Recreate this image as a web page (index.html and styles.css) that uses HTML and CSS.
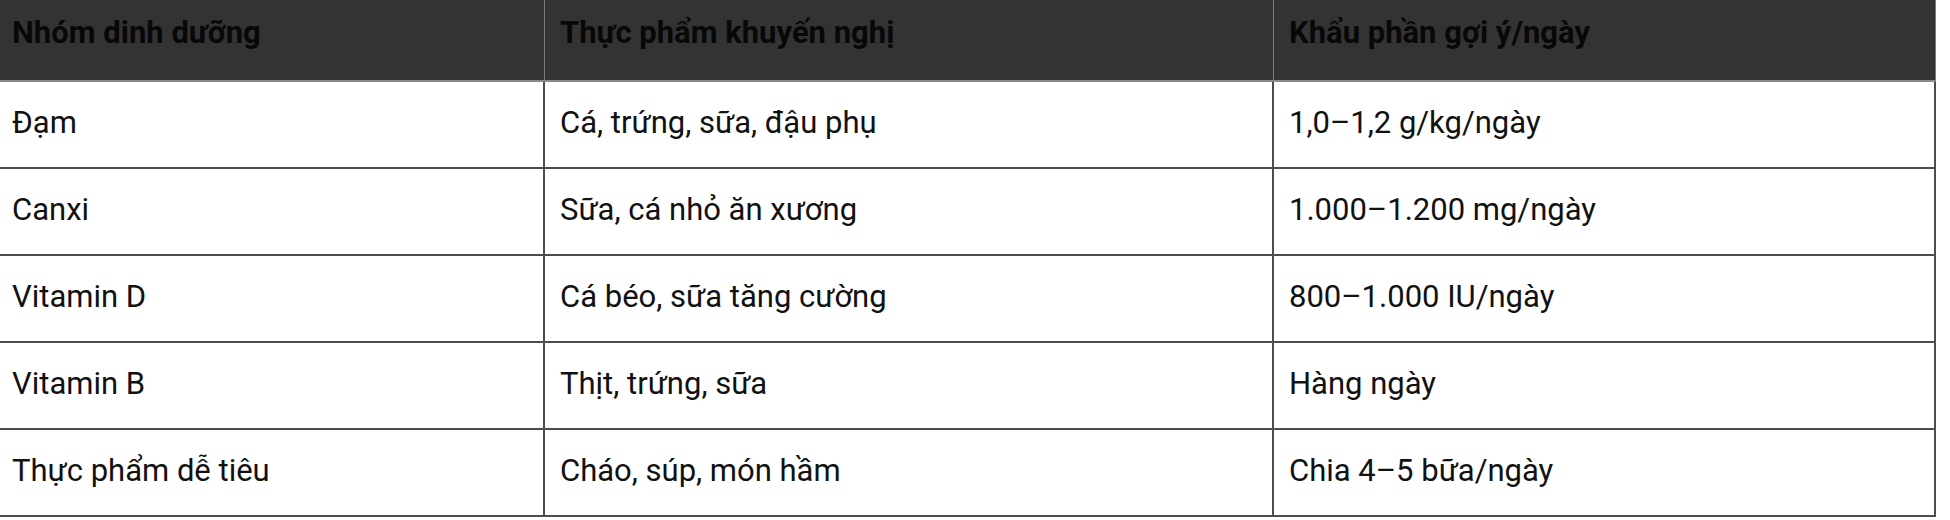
FILE: index.html
```html
<!DOCTYPE html>
<html lang="vi">
<head>
<meta charset="utf-8">
<title>Dinh dưỡng</title>
<link rel="stylesheet" href="styles.css">
</head>
<body>
<table class="nutri">
  <colgroup>
    <col class="c1"><col class="c2"><col class="c3">
  </colgroup>
  <thead>
    <tr>
      <th>Nhóm dinh dưỡng</th>
      <th>Thực phẩm khuyến nghị</th>
      <th>Khẩu phần gợi ý/ngày</th>
    </tr>
  </thead>
  <tbody>
    <tr><td>Đạm</td><td>Cá, trứng, sữa, đậu phụ</td><td>1,0–1,2 g/kg/ngày</td></tr>
    <tr><td>Canxi</td><td>Sữa, cá nhỏ ăn xương</td><td>1.000–1.200 mg/ngày</td></tr>
    <tr><td>Vitamin D</td><td>Cá béo, sữa tăng cường</td><td>800–1.000 IU/ngày</td></tr>
    <tr><td>Vitamin B</td><td>Thịt, trứng, sữa</td><td>Hàng ngày</td></tr>
    <tr><td>Thực phẩm dễ tiêu</td><td>Cháo, súp, món hầm</td><td>Chia 4–5 bữa/ngày</td></tr>
  </tbody>
</table>
</body>
</html>
```

FILE: styles.css
```css
html, body {
  margin: 0;
  padding: 0;
  background: #ffffff;
}

body {
  font-family: Roboto, "Noto Sans", "Liberation Sans", sans-serif;
  color: #111111;
}

.nutri {
  border-collapse: separate;
  border-spacing: 0;
  width: 1936px;
  table-layout: fixed;
  font-size: 31px;
}

.c1 { width: 545px; }
.c2 { width: 729px; }
.c3 { width: 662px; }

.nutri th {
  background: #333333;
  color: #080808;
  font-weight: 700;
  text-align: left;
  padding: 15px 15px 29px;
  border-right: 1px solid #7a7a7a;
  border-bottom: 2px solid #8a8a8a;
  line-height: 36px;
  height: 36px;
}

.nutri td {
  font-weight: 400;
  text-align: left;
  padding: 23px 15px 26px;
  border-right: 2px solid #4d4d4d;
  border-bottom: 2px solid #4d4d4d;
  line-height: 36px;
  height: 36px;
}

.nutri th:first-child,
.nutri td:first-child {
  padding-left: 12px;
}
```
